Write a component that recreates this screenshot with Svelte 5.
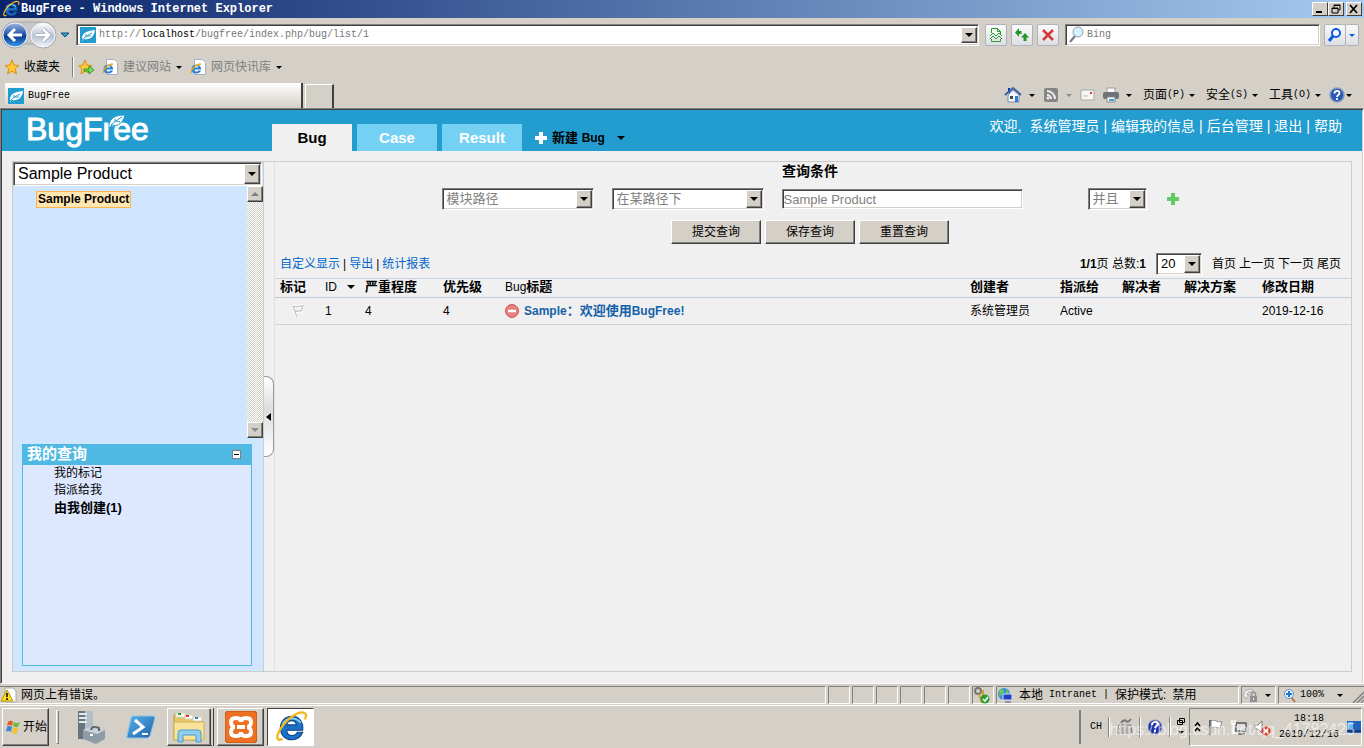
<script lang="ts">
  let product = "Sample Product";
  let field = "模块路径";
  let operator = "在某路径下";
  let keyword = "Sample Product";
  let joiner = "并且";
  let pageSize = "20";
  let search = "";

  const tabs = ["Bug", "Case", "Result"];
  const userLinks = ["编辑我的信息", "后台管理", "退出", "帮助"];
  const listLinks = ["自定义显示", "导出", "统计报表"];
  const pageLinks = ["首页", "上一页", "下一页", "尾页"];
  const queryButtons = ["提交查询", "保存查询", "重置查询"];
  const menus = [
    ["页面", "(P)"],
    ["安全", "(S)"],
    ["工具", "(O)"],
  ];
</script>

{#snippet ie(size: number)}
  <svg width={size} height={size} viewBox="0 0 32 32" aria-hidden="true">
    <path d="M27 19H12c0 3 2 5 5 5 2 0 4-1 5-3h5c-2 5-6 7-10 7-7 0-11-5-11-11S10 6 17 6s11 6 10 13zM12 14h9c0-2-2-4-4-4-3 0-5 2-5 4z" fill="#1a72c8" stroke="#0c3f86" stroke-width="1" />
    <path d="M8 13c2-3 5-5 9-5 3 0 6 1 8 4" fill="none" stroke="#7ccbf8" stroke-width="2" />
    <path d="M8 27c-5 3-7-1-2-9C12 8 24 0 29 3c2 1 1 4 0 6" fill="none" stroke="#f2b71c" stroke-width="2.2" />
  </svg>
{/snippet}

{#snippet leaf()}
  <svg width="16" height="16" viewBox="0 0 16 16" aria-hidden="true">
    <rect width="16" height="16" fill="#239dd0" />
    <path d="M2 12c0-6 4-8 13-9-1 7-5 10-11 9l-2 2z" fill="#fff" />
    <path d="M2 13c3-3 6-5 10-7M6 10l0-3M7 9l4 0" fill="none" stroke="#239dd0" />
  </svg>
{/snippet}

{#snippet caret()}
  <i class="caret"></i>
{/snippet}

{#snippet iePage()}
  <svg width="16" height="16" viewBox="0 0 16 16" aria-hidden="true">
    <path d="M4.500 .5h8l3 3v12h-11z" fill="#fff" stroke="#a4b0c0" />
    <path d="M11 10.500H4c0 2.500 3.500 2.500 4.500 1H11c-1.500 4.500-9.500 4-9.500-1.500S11.500 4 11 10.500zM4 8.500h4.500C8 6 4.500 6 4 8.500z" fill="#1f7fd6" />
    <path d="M2 14c-3-2 4-9 9-9" fill="none" stroke="#eda91c" stroke-width="1.300" />
  </svg>
{/snippet}

<div class="desktop">
  <header class="title-bar">
    {@render ie(18)}
    <span class="title">BugFree - Windows Internet Explorer</span>
    <div class="window-buttons">
      <button aria-label="最小化"><svg width="12" height="10" viewBox="0 0 12 10"><path d="M2 8h6" stroke="#000" stroke-width="2" /></svg></button>
      <button aria-label="还原"><svg width="12" height="10" viewBox="0 0 12 10"><path d="M4 3.500V1h6v5H8M4 1.500h6M2 4h6v5H2zM2 4.500h6" fill="none" stroke="#000" /></svg></button>
      <button class="close" aria-label="关闭"><svg width="12" height="10" viewBox="0 0 12 10"><path d="M2 1l7 8M9 1L2 9" stroke="#000" stroke-width="1.700" /></svg></button>
    </div>
  </header>

  <div class="nav-bar">
    <button class="history" aria-label="后退和前进">
      <svg width="56" height="28" viewBox="0 0 56 28">
        <defs>
          <linearGradient id="back" x2="0" y2="1">
            <stop offset="0" stop-color="#9ab8e4" />
            <stop offset=".5" stop-color="#1e4fa4" />
            <stop offset=".55" stop-color="#0b378c" />
            <stop offset="1" stop-color="#3aa0ee" />
          </linearGradient>
          <linearGradient id="forward" x2="0" y2="1">
            <stop offset="0" stop-color="#fff" />
            <stop offset=".55" stop-color="#b9c1d3" />
            <stop offset="1" stop-color="#eef4fc" />
          </linearGradient>
        </defs>
        <path d="M14 1h28a13 13 0 0 1 0 26q-5 0-9-4h-10q-4 4-9 4a13 13 0 0 1 0-26z" fill="#c6c6ca" stroke="#a5a5a8" />
        <circle cx="14" cy="14" r="12" fill="url(#back)" stroke="#f1f4fa" />
        <circle cx="42" cy="14" r="12" fill="url(#forward)" stroke="#f8f8fa" />
        <path d="M21 14H9M14 8l-6 6 6 6" fill="none" stroke="#fff" stroke-width="3" />
        <path d="M35 14h12M42 8l6 6-6 6" fill="none" stroke="#9aa3b5" stroke-width="4" />
        <path d="M35 14h12M42 8l6 6-6 6" fill="none" stroke="#fff" stroke-width="2.500" />
      </svg>
    </button>
    <button class="recent" aria-label="最近的网页"><svg width="10" height="6" viewBox="0 0 10 6"><path d="M1 1h8L5 5z" fill="#2a9fd8" stroke="#0c4a80" /></svg></button>
    <div class="address sunken">
      {@render leaf()}
      <a class="url mono" href="#top">http://<b>localhost</b>/bugfree/index.php/bug/list/1</a>
      <button class="drop raised" aria-label="显示地址">{@render caret()}</button>
    </div>
    <div class="nav-tools">
      <button class="tool" aria-label="兼容性视图"><svg width="16" height="16" viewBox="0 0 16 16"><path d="M3.500 6V1.500h6l3 3V8M9.500 1.500v3h3" fill="#f4fff2" stroke="#2c9a34" /><path d="M2 9l3-3 3 3 3-3 3 3M2 12l3-3 3 3 3-3 3 3" fill="none" stroke="#2c9a34" /><path d="M3.500 12v2.500h9V12" fill="none" stroke="#2c9a34" /></svg></button>
      <button class="tool" aria-label="刷新"><svg width="16" height="16" viewBox="0 0 16 16"><path d="M5 1L1 5.500 5 10V7h2.500V4H5zM11 6l4 4.500h-2.500V14h-3v-3.500H7z" fill="#25942c" /></svg></button>
      <button class="tool" aria-label="停止"><svg width="16" height="16" viewBox="0 0 16 16"><path d="M3 3l10 10M13 3L3 13" stroke="#d63a38" stroke-width="2.500" /></svg></button>
    </div>
    <div class="search sunken">
      <svg width="16" height="18" viewBox="0 0 16 18" aria-hidden="true"><circle cx="9" cy="6" r="5" fill="#d8efff" stroke="#8aa2b6" /><path d="M6 10l-5 6" stroke="#777" stroke-width="2" /></svg>
      <input class="mono" aria-label="Bing" placeholder="Bing" bind:value={search} />
    </div>
    <div class="search-go">
      <button class="tool" aria-label="搜索"><svg width="16" height="16" viewBox="0 0 16 16"><circle cx="9" cy="6" r="4" fill="#fff" stroke="#0b5be0" stroke-width="2" /><path d="M6 9l-4 5" stroke="#0b5be0" stroke-width="3" /></svg></button>
      <button class="tool narrow" aria-label="搜索选项"><i class="caret blue"></i></button>
    </div>
  </div>

  <nav class="favorites">
    <button class="fav">
      <svg width="16" height="16" viewBox="0 0 16 16" aria-hidden="true"><path d="M8 1l2 5 5 .5-4 3.500 1.500 5L8 12l-4.500 3L5 10 1 6.500 6 6z" fill="#ffc93a" stroke="#d98e12" /></svg>
      收藏夹
    </button>
    <span class="rule"></span>
    <button class="fav" aria-label="添加到收藏夹栏">
      <svg width="16" height="16" viewBox="0 0 16 16"><path d="M7 1l2 5 5 .5-4 3.500 1 4-4-2-4 3L4 10 1 6.500 5 6z" fill="#ffc93a" stroke="#d98e12" /><path d="M6 10h5V7l5 4-5 4v-3H6z" fill="#7fe05a" stroke="#2a9a2e" /></svg>
    </button>
    <a class="fav grey" href="#sites">{@render iePage()}建议网站{@render caret()}</a>
    <a class="fav grey" href="#slices">{@render iePage()}网页快讯库{@render caret()}</a>
  </nav>

  <div class="browser-tabs">
    <button class="browser-tab mono">{@render leaf()}BugFree</button>
    <button class="new-tab" aria-label="新选项卡"></button>
    <div class="commands">
      <button aria-label="主页"><svg width="18" height="18" viewBox="0 0 18 18"><path d="M4 2h2v5H4z" fill="#0c2ec0" /><path d="M4 9v7h11V9L9 4z" fill="#f2f5fa" stroke="#7a8ca8" /><path d="M1 9l8-7 8 7" fill="none" stroke="#3c64a4" stroke-width="2" /><path d="M11 10h3v6h-3z" fill="#2f80d0" /><path d="M6 10h3v3H6z" fill="#445" /></svg>{@render caret()}</button>
      <button aria-label="源"><svg width="16" height="16" viewBox="0 0 16 16"><rect x="1" y="1" width="14" height="14" rx="2" fill="#858585" /><path d="M4 8a4 4 0 0 1 4 4M4 4a8 8 0 0 1 8 8" fill="none" stroke="#eee" stroke-width="2" /><circle cx="5" cy="11" r="1.500" fill="#eee" /></svg><i class="caret dim"></i></button>
      <button aria-label="阅读邮件"><svg width="15" height="12" viewBox="0 0 15 12"><path d="M1 1h13v10H1z" fill="#f7f7f4" stroke="#a8a8a8" /><path d="M10 3h2v2h-2z" fill="#d33" /><path d="M3 7h5" stroke="#bbb" /></svg></button>
      <button aria-label="打印"><svg width="16" height="16" viewBox="0 0 16 16"><path d="M4 1h8v5H4z" fill="#fff" stroke="#999" /><rect y="5" width="16" height="7" rx="2" fill="#6f7276" /><path d="M4 10h8v5H4z" fill="#fff" stroke="#888" /><path d="M6 12h5v2H6z" fill="#3ba0c8" /></svg>{@render caret()}</button>
      {#each menus as [label, key]}
        <button class="menu">{label}<span class="mono">{key}</span>{@render caret()}</button>
      {/each}
      <button class="help" aria-label="帮助"><svg width="16" height="16" viewBox="0 0 16 16"><circle cx="8" cy="8" r="7" fill="#2858b8" stroke="#8a9cc0" stroke-width="1.500" /><path d="M5.500 6.500C5.500 3 10.500 3 10.500 6c0 2-2.500 2-2.500 4M8 11v2" fill="none" stroke="#fff" stroke-width="1.800" /></svg>{@render caret()}</button>
    </div>
  </div>

  <main class="page" id="top">
    <header class="app-header">
      <a class="logo" href="#home">
        BugFree
        <svg width="18" height="14" viewBox="0 0 18 14" aria-hidden="true">
          <path d="M1 11C2 4 7 1 17 1c-2 7-6 12-13 10l-3 3z" fill="#fff" stroke="#239dd0" />
          <path d="M3 11c3-3 6-5 11-8M7 8V5M8 7l4 1" fill="none" stroke="#239dd0" />
        </svg>
      </a>
      <nav class="app-tabs">
        {#each tabs as tab, i}
          <a class="app-tab" class:active={i === 0} href="#{tab}">{tab}</a>
        {/each}
      </nav>
      <button class="new-bug">
        <svg width="12" height="12" viewBox="0 0 12 12" aria-hidden="true"><path d="M4 0h4v4h4v4H8v4H4V8H0V4h4z" fill="#fff" /></svg>
        <span>新建 <b>Bug</b></span>
        {@render caret()}
      </button>
      <div class="user-links">
        <span>欢迎,</span><span class="user">系统管理员</span>
        {#each userLinks as link}
          <span class="bar">|</span><a href="#{link}">{link}</a>
        {/each}
      </div>
    </header>

    <div class="workspace">
      <aside class="sidebar">
        <div class="combo sunken product">
          <select aria-label="产品" bind:value={product}><option>Sample Product</option></select>
          <span class="drop raised">{@render caret()}</span>
        </div>
        <div class="tree">
          <div class="tree-body"><a href="#product">Sample Product</a></div>
          <div class="scrollbar">
            <button class="raised" aria-label="向上滚动"><i class="caret up dim"></i></button>
            <button class="raised" aria-label="向下滚动"><i class="caret dim"></i></button>
          </div>
        </div>
        <section class="my-queries">
          <h2>我的查询<button aria-label="折叠"></button></h2>
          <ul>
            <li><a href="#marked">我的标记</a></li>
            <li><a href="#assigned">指派给我</a></li>
            <li><a class="strong" href="#opened">由我创建(1)</a></li>
          </ul>
        </section>
      </aside>

      <div class="splitter">
        <button aria-label="收起侧栏"><svg width="5" height="8" viewBox="0 0 5 8"><path d="M5 0v8L0 4z" /></svg></button>
      </div>

      <section class="content">
        <form class="query" onsubmit={(e) => e.preventDefault()}>
          <h1>查询条件</h1>
          <div class="conditions">
            <div class="combo sunken field">
              <select aria-label="字段" bind:value={field}><option>模块路径</option></select>
              <span class="drop raised">{@render caret()}</span>
            </div>
            <div class="combo sunken field">
              <select aria-label="条件" bind:value={operator}><option>在某路径下</option></select>
              <span class="drop raised">{@render caret()}</span>
            </div>
            <input class="keyword sunken" aria-label="值" bind:value={keyword} />
            <div class="combo sunken joiner">
              <select aria-label="逻辑" bind:value={joiner}><option>并且</option><option>或者</option></select>
              <span class="drop raised">{@render caret()}</span>
            </div>
            <button class="add" aria-label="添加条件"><svg width="12" height="12" viewBox="0 0 12 12"><path d="M4 0h4v4h4v4H8v4H4V8H0V4h4z" fill="#62cb67" /></svg></button>
          </div>
          <div class="query-buttons">
            {#each queryButtons as label}
              <button class="raised">{label}</button>
            {/each}
          </div>
        </form>

        <div class="list-bar">
          <div class="list-links">
            {#each listLinks as link, i}
              {#if i > 0}<span>|</span>{/if}<a href="#{link}">{link}</a>
            {/each}
          </div>
          <div class="pager">
            <span><b>1/1</b>页 总数:<b>1</b></span>
            <div class="combo sunken size">
              <select aria-label="每页条数" bind:value={pageSize}><option>20</option><option>50</option></select>
              <span class="drop raised">{@render caret()}</span>
            </div>
            <div class="page-links">
              {#each pageLinks as link}<a href="#{link}">{link}</a>{/each}
            </div>
          </div>
        </div>

        <table>
          <colgroup>
            <col class="w45" /><col class="w40" /><col class="w78" /><col class="w62" /><col />
            <col class="w90" /><col class="w62" /><col class="w62" /><col class="w78" /><col class="w94" />
          </colgroup>
          <thead>
            <tr>
              <th>标记</th>
              <th class="sorted"><span>ID {@render caret()}</span></th>
              <th>严重程度</th>
              <th>优先级</th>
              <th><span class="latin">Bug</span>标题</th>
              <th>创建者</th>
              <th>指派给</th>
              <th>解决者</th>
              <th>解决方案</th>
              <th>修改日期</th>
            </tr>
          </thead>
          <tbody>
            <tr>
              <td class="flag"><svg width="14" height="14" viewBox="0 0 14 14" aria-hidden="true"><path d="M2 2c4 2 6-1 10 0l-2 5c-2-1-3 1-6 0M2 2l4 11" fill="none" stroke="#fff" stroke-width="3" /><path d="M2 2c4 2 6-1 10 0l-2 5c-2-1-3 1-6 0M2 2l4 11" fill="none" stroke="#c2c2c2" stroke-width="1.300" /></svg></td>
              <td>1</td>
              <td>4</td>
              <td>4</td>
              <td>
                <a class="bug" href="#bug-1">
                  <svg width="14" height="14" viewBox="0 0 14 14" aria-hidden="true"><circle cx="7" cy="7" r="6.500" fill="#e88080" stroke="#c85858" /><path d="M3 7h8" stroke="#fff" stroke-width="2.500" /></svg>
                  <span>Sample<span class="wide">：欢迎使用</span>BugFree!</span>
                </a>
              </td>
              <td>系统管理员</td>
              <td>Active</td>
              <td></td>
              <td></td>
              <td>2019-12-16</td>
            </tr>
          </tbody>
        </table>
      </section>
    </div>
  </main>

  <footer class="status-bar">
    <div class="cell message">
      <svg width="16" height="16" viewBox="0 0 16 16" aria-hidden="true"><path d="M4 1h8l3 3v11H4z" fill="#fff" stroke="#aaa" /><path d="M6 3l6 11H0z" fill="#ffe020" stroke="#b89500" /><path d="M6 6v4M6 11v2" stroke="#000" stroke-width="1.500" /></svg>
      网页上有错误。
    </div>
    {#each { length: 6 } as _}<div class="cell blank"></div>{/each}
    <div class="cell key">
      <svg width="18" height="17" viewBox="0 0 18 17" aria-hidden="true"><circle cx="5" cy="4" r="3" fill="none" stroke="#777" stroke-width="2" /><path d="M6 7l3 9M10 3v9" stroke="#d8a428" stroke-width="2" /><circle cx="12" cy="12" r="4.500" fill="#2c9c34" /><path d="M10 12l2 2 3-4" fill="none" stroke="#fff" stroke-width="1.500" /></svg>
    </div>
    <div class="cell zone">
      <svg width="16" height="16" viewBox="0 0 16 16" aria-hidden="true"><circle cx="7" cy="7" r="6" fill="#3c8fe0" /><path d="M3 3c3-2 5 0 3 3S4 9 2 8zM9 2l3 4-3 1z" fill="#66cf50" /><path d="M6 7h9v6H6z" fill="#1c42c8" stroke="#dde" /><path d="M8 15h6" stroke="#556" /></svg>
      <span>本地</span><span class="mono">Intranet</span><span class="mono">|</span><span>保护模式:</span><span>禁用</span>
    </div>
    <div class="cell lock">
      <svg width="17" height="16" viewBox="0 0 17 16" aria-hidden="true"><path d="M1 8l3 4 3-4H5c0-3 3-4 6-3V3C6 1 2 4 2 8z" fill="#f0f0f0" stroke="#aaa" /><path d="M8 9h7v6H8z" fill="#909090" /><path d="M9.500 9V6.500q2-3 4 0V9" fill="none" stroke="#909090" stroke-width="1.500" /><path d="M11.500 11v2" stroke="#eee" /></svg>
      {@render caret()}
    </div>
    <div class="cell zoom">
      <svg width="14" height="15" viewBox="0 0 14 15" aria-hidden="true"><path d="M8 9l4 5" stroke="#a9774c" stroke-width="2" /><circle cx="6" cy="6" r="4.500" fill="#e8f5ff" stroke="#6b8eb8" /><path d="M3 6h6M6 3v6" stroke="#167bd0" stroke-width="2" /></svg>
      <span class="mono">100%</span>
      {@render caret()}
      <svg class="grip" width="12" height="12" viewBox="0 0 12 12" aria-hidden="true"><path d="M1 12L12 1M5 12l7-7M9 12l3-3" stroke="#808080" stroke-width="1.500" /></svg>
    </div>
  </footer>

  <footer class="taskbar">
    <button class="start raised">
      <svg width="17" height="16" viewBox="0 0 17 16" aria-hidden="true"><path d="M3 3q3-3 5 0L7 7Q4 5 2 7z" fill="#e8582a" /><path d="M9 3q3 2 6 0l-2 5q-3 1-5-1z" fill="#76b93a" /><path d="M2 8q2-2 5 0l-1 5q-3-2-5 0z" fill="#3a86d8" /><path d="M8 8q2 2 5 1l-1 5q-3 2-5 0z" fill="#f5c02c" /></svg>
      开始
    </button>
    <span class="divider"></span>
    <div class="tasks">
      <button class="task" aria-label="服务器管理器"><svg width="32" height="34" viewBox="0 0 32 34"><path d="M3 1h10v28H3z" fill="#68747e" /><path d="M10 1h8v26l-5 2h-3z" fill="#b4bec6" /><path d="M4 4h8M4 8h8M4 12h8" stroke="#e5eaee" stroke-width="2" /><path d="M8 20l6-3 16 3v9l-9 5-13-5z" fill="#8e9ca8" /><path d="M8 20l6-3 16 3-8 4z" fill="#c9d2d9" /><path d="M16 20q1-5 8-2v3" fill="none" stroke="#5a6670" stroke-width="2" /><path d="M15 25h3" stroke="#fff" stroke-width="2" /></svg></button>
      <button class="task" aria-label="PowerShell"><svg width="32" height="28" viewBox="0 0 32 28"><defs><linearGradient id="shell" x2="1" y2="1"><stop offset="0" stop-color="#58b4ea" /><stop offset="1" stop-color="#1f5fa8" /></linearGradient></defs><path d="M8 3h20q2 0 2 2l-5 18q-1 2-3 2H3q-2 0-1-2L6 5q0-2 2-2z" fill="url(#shell)" stroke="#8cc6ea" /><path d="M10 7l8 7-10 7" fill="none" stroke="#fff" stroke-width="3" /><path d="M17 21h6" stroke="#fff" stroke-width="2" /></svg></button>
      <button class="task open raised stacked" aria-label="资源管理器"><svg width="34" height="32" viewBox="0 0 34 32"><path d="M2 4h11l2 3h15v22H2z" fill="#e5c766" stroke="#b79842" /><path d="M4 2h9v4H4zM13 4h8v4h-8zM21 6h9v4h-9z" fill="#fff" stroke="#d8d2bc" /><path d="M6 3h3" stroke="#2a9a2e" stroke-width="2" /><path d="M14 5h3" stroke="#d33" stroke-width="2" /><path d="M23 7h3" stroke="#28c" stroke-width="2" /><path d="M2 11h30v18H2z" fill="#f7e39a" stroke="#d0b257" /><path d="M6 31v-9q0-3 3-3h17q3 0 3 3v9h-5v-7H11v7z" fill="#8fcdf0" stroke="#4a9ccc" /></svg></button>
      <button class="task open raised" aria-label="XAMPP"><svg width="32" height="32" viewBox="0 0 32 32"><rect width="32" height="32" rx="4" fill="#ee7023" stroke="#c0500e" /><path d="M12 16h8M16 11c0-3-2-4-5-4-4 0-5 2-5 4 0 3 2 5 4 5-2 0-4 2-4 5 0 2 1 4 5 4 3 0 5-1 5-4M16 11c0-3 2-4 5-4 4 0 5 2 5 4 0 3-2 5-4 5 2 0 4 2 4 5 0 2-1 4-5 4-3 0-5-1-5-4" fill="none" stroke="#fff" stroke-width="4" /></svg></button>
      <button class="task pressed" aria-label="Internet Explorer">{@render ie(34)}</button>
    </div>
    <div class="language">
      <span class="mono">CH</span>
      <span class="notch"></span>
      <svg width="17" height="18" viewBox="0 0 17 18" aria-hidden="true"><path d="M3 7h12l1 8H1z" fill="#e4e4e4" stroke="#777" /><path d="M4 9h10M3 11h12M3 13h12" stroke="#777" /><path d="M5 5q3-4 5-2t5-2" fill="none" stroke="#777" stroke-width="2" /></svg>
      <span class="notch"></span>
      <svg width="16" height="18" viewBox="0 0 16 18" aria-hidden="true"><circle cx="8" cy="9" r="7" fill="#1c2ca8" stroke="#8890d0" /><path d="M5 7c0-4 6-4 6-1 0 2-3 2-3 4M8 12v2" fill="none" stroke="#fff" stroke-width="2" /></svg>
      <span class="notch"></span>
      <svg width="8" height="18" viewBox="0 0 8 18" aria-hidden="true"><path d="M2.500 .5h5v4h-5zM.5 2.500h5v4h-5z" fill="#d4d0c8" stroke="#000" /><path d="M1 13h6l-3 3z" /></svg>
    </div>
    <div class="tray">
      <svg width="7" height="12" viewBox="0 0 7 12" aria-hidden="true"><path d="M1 5l2.500-3L6 5M1 10l2.500-3L6 10" fill="none" stroke="#000" stroke-width="1.500" /></svg>
      <svg width="16" height="16" viewBox="0 0 16 16" aria-hidden="true"><path d="M2 1v15" stroke="#666" stroke-width="2" /><path d="M3 2c4-2 5 1 11 1l-2 6c-4 0-5-2-9 0z" fill="#fff" stroke="#888" /></svg>
      <svg width="16" height="16" viewBox="0 0 16 16" aria-hidden="true"><path d="M5 4h10v8H5zM7 15h7" fill="#ddd" stroke="#555" stroke-width="1.500" /><path d="M1 1v4h3V1M2.500 5v9h3" fill="none" stroke="#fff" stroke-width="1.500" /></svg>
      <svg width="17" height="17" viewBox="0 0 17 17" aria-hidden="true"><path d="M1 6h3l4-4v12l-4-4H1z" fill="#fff" stroke="#777" /><circle cx="12" cy="12" r="4.500" fill="#dd3a2c" /><path d="M10 10l4 4M14 10l-4 4" stroke="#fff" stroke-width="1.500" /></svg>
      <div class="clock mono"><span>18:18</span><span>2019/12/16</span></div>
      <svg width="14" height="14" viewBox="0 0 14 14" aria-hidden="true"><path d="M0 1h14v12H0z" fill="#1f62c0" /><path d="M1 2h5v6H1z" fill="#6eb6f0" /><path d="M0 11h14" stroke="#173a70" stroke-width="2" /></svg>
    </div>
    <span class="watermark">https://blog.csdn.net/qq_41782425</span>
  </footer>
</div>

<style>
  :global(body) {
    background: #d4d0c8;
  }

  .desktop {
    display: flex;
    flex-direction: column;
    min-height: 100vh;
    font: 12px/16px "Liberation Sans", "Noto Sans CJK SC", sans-serif;
    color: #000;
    background: #d4d0c8;
  }

  .desktop * {
    box-sizing: border-box;
  }

  button,
  select,
  input {
    margin: 0;
    padding: 0;
    border: 0;
    border-radius: 0;
    background: transparent;
    font: inherit;
    color: inherit;
  }

  a {
    color: inherit;
    text-decoration: none;
  }

  svg {
    display: block;
    flex: none;
  }

  .mono {
    font-family: "Liberation Mono", "Noto Sans CJK SC", monospace;
    font-size: 10px;
  }

  .sunken {
    border: 1px solid;
    border-color: #808080 #fff #fff #808080;
    box-shadow: inset 1px 1px #404040, inset -1px -1px #d4d0c8;
    background: #fff;
  }

  .raised {
    border: 1px solid;
    border-color: #fff #404040 #404040 #fff;
    box-shadow: inset -1px -1px #808080;
    background: #d4d0c8;
  }

  .caret {
    flex: none;
    display: inline-block;
    border: 3px solid transparent;
    border-top-color: #000;
    border-bottom: 0;
  }

  .drop .caret,
  .sorted .caret,
  .new-bug .caret,
  .scrollbar .caret {
    border-width: 4px;
    border-bottom-width: 0;
  }

  .scrollbar .caret.up {
    border-top-width: 0;
    border-bottom: 4px solid #808080;
  }

  .caret.dim {
    border-top-color: #8c8c8c;
  }

  .caret.blue {
    border-top-color: #0b5be0;
  }

  .title-bar {
    display: flex;
    align-items: center;
    gap: 1px;
    height: 18px;
    padding: 0 2px;
    background: linear-gradient(90deg, #0a246a, #a6caf0);
  }

  .title {
    flex: 1;
    color: #fff;
    font: bold 12px/18px "Liberation Mono", monospace;
  }

  .window-buttons {
    display: flex;
  }

  .window-buttons button {
    width: 16px;
    height: 14px;
    padding: 1px;
    border: 1px solid;
    border-color: #fff #404040 #404040 #fff;
    background: #d4d0c8;
  }

  .window-buttons .close {
    margin-left: 2px;
  }

  .nav-bar {
    display: flex;
    align-items: center;
    height: 34px;
    padding: 0 5px 0 1px;
  }

  .recent {
    margin: 0 6px 0 3px;
  }

  .address {
    flex: 1;
    display: flex;
    align-items: center;
    height: 22px;
    padding: 2px 1px 2px 3px;
  }

  .url {
    flex: 1;
    margin-left: 3px;
    color: #777;
  }

  .url b {
    font-weight: normal;
    color: #000;
  }

  .drop {
    display: flex;
    align-items: center;
    justify-content: center;
    flex: none;
    width: 16px;
    align-self: stretch;
  }

  .nav-tools {
    display: flex;
    gap: 4px;
    margin: 0 6px;
  }

  .tool {
    display: flex;
    align-items: center;
    justify-content: center;
    width: 22px;
    height: 22px;
    border: 1px solid #b0b2ba;
    border-radius: 2px;
    background: linear-gradient(#fafafa, #dedfe4);
  }

  .tool.narrow {
    width: 13px;
    border-left: 0;
  }

  .search {
    display: flex;
    align-items: center;
    flex: 0 0 255px;
    height: 22px;
    padding: 0 3px;
  }

  .search input {
    flex: 1;
    min-width: 0;
    margin-left: 2px;
    outline: 0;
  }

  .search input::placeholder {
    color: #777;
    opacity: 1;
  }

  .search-go {
    display: flex;
    margin-left: 4px;
  }

  .favorites {
    display: flex;
    align-items: center;
    height: 30px;
    padding: 0 4px;
  }

  .fav {
    display: flex;
    align-items: center;
    gap: 4px;
  }

  .fav.grey {
    gap: 5px;
    margin-left: 8px;
    color: #808080;
  }

  .rule {
    width: 2px;
    height: 20px;
    margin: 0 4px 0 12px;
    border-left: 1px solid #808080;
    border-right: 1px solid #fff;
  }

  .browser-tabs {
    display: flex;
    align-items: flex-end;
    height: 26px;
    padding-left: 5px;
  }

  .browser-tab {
    display: flex;
    align-items: center;
    gap: 4px;
    width: 298px;
    height: 25px;
    padding: 0 3px;
    border-right: 2px solid #404040;
    background: linear-gradient(#fff, #d4d0c8);
  }

  .new-tab {
    width: 29px;
    height: 24px;
    margin-left: 2px;
    border: 1px solid #fff;
    border-right: 2px solid #404040;
    border-bottom: 0;
  }

  .commands {
    display: flex;
    align-items: center;
    align-self: stretch;
    gap: 8px;
    margin-left: auto;
    padding-right: 12px;
  }

  .commands button {
    display: flex;
    align-items: center;
    gap: 7px;
  }

  .commands .menu {
    gap: 0;
    margin-left: 3px;
  }

  .commands .menu .caret {
    margin-left: 4px;
  }

  .commands .help {
    gap: 1px;
  }

  .page {
    flex: 1;
    display: flex;
    flex-direction: column;
    padding-bottom: 11px;
    border: 1px solid;
    border-color: #808080 #fff #fff #808080;
    box-shadow: inset 1px 1px #404040, inset -1px 0 #d4d0c8;
    background: #f0f0f0;
  }

  .app-header {
    display: flex;
    align-items: flex-end;
    height: 41px;
    margin: 1px 1px 0;
    padding-right: 20px;
    background: #239dd0;
  }

  .logo {
    position: relative;
    width: 270px;
    padding: 0 0 3px 24px;
    font-size: 32px;
    line-height: 38px;
    color: #fff;
    -webkit-text-stroke: 1px #fff;
  }

  .logo svg {
    position: absolute;
    top: 4px;
    left: 106px;
  }

  .app-tabs {
    display: flex;
    gap: 5px;
  }

  .app-tab {
    width: 80px;
    background: #74d1f3;
    color: #fff;
    font-size: 15px;
    font-weight: bold;
    line-height: 27px;
    text-align: center;
  }

  .app-tab.active {
    background: #f0f0f0;
    color: #000;
  }

  .new-bug {
    display: flex;
    align-items: center;
    gap: 5px;
    height: 26px;
    margin-left: 13px;
    font-size: 13px;
    font-weight: bold;
  }

  .new-bug b {
    font-size: 12px;
  }

  .new-bug .caret {
    margin-left: 7px;
  }

  .user-links {
    display: flex;
    align-self: flex-start;
    margin-left: auto;
    color: #fff;
    font-size: 14px;
    line-height: 32px;
  }

  .user {
    margin-left: 8px;
  }

  .bar {
    margin: 0 4px;
  }

  .workspace {
    flex: 1;
    display: flex;
    margin: 10px 11px 0 11px;
    border: 1px solid #ccc;
  }

  .sidebar {
    flex: none;
    display: flex;
    flex-direction: column;
    width: 251px;
    border-right: 1px solid #ccc;
    background: #d0e6ff;
  }

  .combo {
    display: flex;
    padding: 1px;
  }

  .combo select {
    flex: 1;
    min-width: 0;
    padding: 0 3px;
    appearance: none;
    outline: 0;
  }

  .product {
    height: 24px;
    margin-right: 1px;
    font-size: 16px;
    line-height: 20px;
  }

  .tree {
    display: flex;
    height: 252px;
  }

  .tree-body {
    flex: 1;
    padding: 5px 0 0 23px;
  }

  .tree-body a {
    display: inline-block;
    padding: 0 1px;
    border: 1px solid #fbb450;
    background: #ffe6b0;
    font-weight: bold;
    line-height: 15px;
  }

  .scrollbar {
    display: flex;
    flex-direction: column;
    justify-content: space-between;
    width: 16px;
    background: repeating-conic-gradient(#fff 0 25%, #d4d0c8 0 50%) 0 0 / 2px 2px;
  }

  .scrollbar button {
    display: flex;
    align-items: center;
    justify-content: center;
    height: 16px;
  }

  .my-queries {
    flex: 1;
    margin: 6px 11px 5px 9px;
    border: 1px solid #50b9e3;
    background: #dde8ff;
  }

  h2 {
    display: flex;
    align-items: center;
    justify-content: space-between;
    margin: 0;
    padding: 0 10px 2px 4px;
    background: #50b9e3;
    color: #fff;
    font-size: 15px;
    line-height: 18px;
  }

  h2 button {
    width: 9px;
    height: 9px;
    border: 1px solid #808080;
    background: linear-gradient(#000, #000) center / 5px 1px no-repeat #fff;
  }

  ul {
    margin: 0;
    padding: 0 0 0 31px;
    list-style: none;
    line-height: 17px;
  }

  .strong {
    font-size: 13px;
    font-weight: bold;
  }

  .splitter {
    display: flex;
    align-items: flex-start;
    flex: none;
    width: 11px;
    border-right: 1px solid #e0e0e0;
  }

  .splitter button {
    display: flex;
    align-items: center;
    justify-content: center;
    width: 10px;
    height: 81px;
    margin-top: 214px;
    border: 1px solid #999;
    border-left: 0;
    border-radius: 0 8px 8px 0;
    background: linear-gradient(#fff, #ddd 40%, #fff);
  }

  .content {
    flex: 1;
    min-width: 0;
  }

  .query {
    padding-right: 6px;
  }

  h1 {
    margin: 0;
    font-size: 14px;
    line-height: 18px;
    text-align: center;
  }

  .conditions {
    display: flex;
    align-items: center;
    justify-content: center;
    height: 38px;
    color: #808080;
  }

  .conditions .combo,
  .size {
    height: 22px;
  }

  .conditions .field {
    width: 152px;
    margin-right: 18px;
    font-size: 13px;
  }

  .keyword {
    width: 241px;
    height: 20px;
    padding: 0 1px;
    font-size: 13px;
    outline: 0;
  }

  .conditions .joiner {
    width: 59px;
    margin: 0 20px 0 65px;
    font-size: 13px;
  }

  .query-buttons {
    display: flex;
    justify-content: center;
    gap: 4px;
    padding-top: 2px;
  }

  .query-buttons button {
    width: 90px;
    height: 24px;
  }

  .list-bar {
    display: flex;
    align-items: center;
    justify-content: space-between;
    height: 34px;
    padding: 5px 10px 0 5px;
  }

  .list-links {
    display: flex;
    gap: 3px;
  }

  .list-links a {
    color: #06c;
  }

  .pager,
  .page-links {
    display: flex;
    align-items: center;
  }

  .pager {
    gap: 10px;
  }

  .page-links {
    gap: 3px;
  }

  .size {
    width: 46px;
    font-size: 13px;
  }

  table {
    width: 100%;
    border-collapse: collapse;
    table-layout: fixed;
  }

  th,
  td {
    padding: 0 5px;
    text-align: left;
    white-space: nowrap;
  }

  th {
    height: 19px;
    padding-bottom: 2px;
    border-top: 1px solid #c8d4e0;
    border-bottom: 1px solid #c0ccd8;
    font-size: 13px;
    line-height: 16px;
  }

  .sorted {
    font-weight: normal;
    font-size: 12px;
  }

  .sorted span {
    display: flex;
    align-items: center;
    justify-content: space-between;
  }

  .latin {
    font-weight: normal;
    font-size: 12px;
  }

  .wide {
    font-size: 13px;
  }

  td {
    height: 27px;
    border-bottom: 1px solid #d2d2d2;
  }

  .flag svg {
    margin-left: 11px;
  }

  .bug {
    display: flex;
    align-items: center;
    gap: 5px;
    color: #1560a8;
    font-weight: bold;
  }

  .w40 {
    width: 40px;
  }

  .w45 {
    width: 45px;
  }

  .w62 {
    width: 62px;
  }

  .w78 {
    width: 78px;
  }

  .w90 {
    width: 90px;
  }

  .w94 {
    width: 94px;
  }

  .status-bar {
    display: flex;
    gap: 2px;
    height: 21px;
    padding: 2px 0 1px;
  }

  .cell {
    display: flex;
    align-items: center;
    gap: 3px;
    border: 1px solid;
    border-color: #808080 #fff #fff #808080;
    white-space: nowrap;
  }

  .message {
    flex: 1;
    gap: 4px;
    padding-left: 1px;
    border-left: 0;
  }

  .blank {
    width: 22px;
  }

  .key {
    width: 22px;
  }

  .zone {
    width: 243px;
    gap: 6px;
  }

  .lock {
    width: 35px;
    gap: 6px;
  }

  .zoom {
    width: 86px;
    padding-left: 4px;
    border-right: 0;
  }

  .zoom .caret {
    margin-left: 10px;
  }

  .grip {
    align-self: flex-end;
    margin-left: auto;
  }

  .taskbar {
    position: relative;
    display: flex;
    align-items: center;
    height: 43px;
    padding: 0 2px;
    border-top: 1px solid #fff;
  }

  .start {
    display: flex;
    align-items: center;
    gap: 1px;
    width: 47px;
    height: 38px;
    padding-left: 2px;
  }

  .divider {
    width: 3px;
    height: 34px;
    margin: 0 8px 0 7px;
    border: 1px solid;
    border-color: #fff #808080 #808080 #fff;
  }

  .tasks {
    display: flex;
    gap: 3px;
    margin-right: auto;
  }

  .task {
    display: flex;
    align-items: center;
    justify-content: center;
    width: 47px;
    height: 38px;
  }

  .stacked {
    border-right: 4px double #404040;
  }

  .pressed {
    border: 1px solid;
    border-color: #404040 #fff #fff #404040;
    background: #fff;
  }

  .language {
    display: flex;
    align-items: center;
    gap: 6px;
    height: 34px;
    padding: 0 4px 0 9px;
    border-left: 2px solid #808080;
  }

  .notch {
    width: 2px;
    height: 20px;
    border-left: 1px solid #808080;
    border-right: 1px solid #fff;
  }

  .tray {
    display: flex;
    align-items: center;
    gap: 7px;
    height: 38px;
    padding-left: 4px;
    border: 1px solid;
    border-color: #808080 #fff #fff #808080;
  }

  .clock {
    display: flex;
    flex-direction: column;
    align-items: center;
    width: 62px;
  }

  .watermark {
    position: absolute;
    right: 9px;
    bottom: 8px;
    color: rgba(255, 255, 255, 0.6);
    font-size: 16px;
    line-height: 20px;
    pointer-events: none;
  }
</style>
